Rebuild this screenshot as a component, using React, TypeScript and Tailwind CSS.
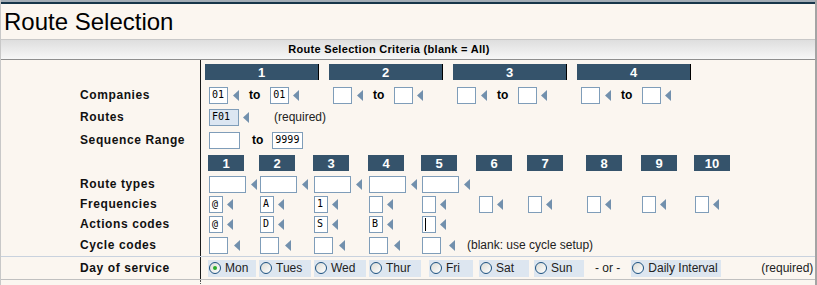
import React from 'react';

const sans = "font-['Liberation_Sans',Arial,sans-serif]";

function Arrow({ className = '' }: { className?: string }) {
  return (
    <svg width="6" height="11" viewBox="0 0 6 11" className={`shrink-0 ${className}`}>
      <path d="M6 0 L0 5.5 L6 11 Z" fill="#7290ad" />
    </svg>
  );
}

function Box({ w, value, blue, cursor, className = '' }: { w: string; value?: string; blue?: boolean; cursor?: boolean; className?: string }) {
  return (
    <div
      className={`${w} h-[17px] shrink-0 border border-[#7f9db9] ${blue ? 'bg-[#dce6f2]' : 'bg-white'} flex items-center pl-[2px] font-['DejaVu_Sans_Mono',monospace] text-[10px] leading-none text-black ${className}`}
    >
      {cursor ? <span className="block w-px h-[13px] bg-black" /> : value}
    </div>
  );
}

function Row({ label, h, children }: { label?: string; h: string; children?: React.ReactNode }) {
  return (
    <div className={`flex ${h}`}>
      <div className="w-[200px] shrink-0 border-r border-[#1a1a1a] pl-[79px] flex items-center font-bold text-[12px] tracking-[0.6px] text-[#111]">
        {label}
      </div>
      <div className="flex items-center flex-1">{children}</div>
    </div>
  );
}

const colW = ['w-[51px]', 'w-[54px]', 'w-[55px]', 'w-[53px]', 'w-[55px]', 'w-[51px]', 'w-[59px]', 'w-[55px]', 'w-[53px]', 'w-[60px]'];

function Bar({ n, w }: { n: string; w: string }) {
  return (
    <div className={`${w} h-[16px] bg-[#35536b] text-white font-bold text-[13px] flex items-center justify-center leading-none`}>
      {n}
    </div>
  );
}

function Radio({ label, w, checked, className = '' }: { label: string; w: string; checked?: boolean; className?: string }) {
  return (
    <div className={`${w} h-[17px] shrink-0 bg-[#dde6f0] flex items-center pl-[1px] ${className}`}>
      <span className="w-[12px] h-[12px] rounded-full border border-[#1c5180] bg-gradient-to-br from-[#dcdcd6] to-white flex items-center justify-center shrink-0">
        {checked && <span className="w-[4px] h-[4px] rounded-full bg-[#2bab2b]" />}
      </span>
      <span className="ml-[4px] text-[12px] text-[#222]">{label}</span>
    </div>
  );
}

export default function App() {
  const freq = ['@', 'A', '1', '', '', '', '', '', '', ''];
  const actions = ['@', 'D', 'S', 'B'];
  return (
    <div className={`w-[817px] h-[285px] overflow-hidden bg-[#fbf6f0] border-l border-[#c8c8c8] border-r-2 border-r-[#a4a4a4] ${sans}`}>
      <div className="h-[2px] bg-[#a3adb6]" />
      <div className="h-[2px] bg-[#17364a]" />
      <div className="h-[35px] flex items-center pl-[3px] text-[24px] text-black leading-none">Route Selection</div>
      <div className="h-[21px] border-t border-[#c8c8c8] border-b border-b-[#8e8e8e] bg-gradient-to-b from-[#dedede] to-[#f7f7f7] flex items-center justify-center pr-[38px] font-bold text-[11px] tracking-[0.3px] text-black">
        Route Selection Criteria (blank = All)
      </div>

      <Row h="h-[24px]">
        <div className="flex pl-[4px]">
          {['1', '2', '3', '4'].map((n) => (
            <div key={n} className="w-[124px]">
              <div className="w-[114px] border-r border-black">
                <Bar n={n} w="w-[113px]" />
              </div>
            </div>
          ))}
        </div>
      </Row>

      <Row label="Companies" h="h-[22px]">
        <div className="flex pl-[4px]">
          {[0, 1, 2, 3].map((i) => (
            <div key={i} className="w-[124px] flex items-center pl-[4px]">
              <Box w="w-[19px]" value={i === 0 ? '01' : ''} />
              <Arrow className="ml-[5px]" />
              <span className="ml-[10px] font-bold text-[12px] text-black">to</span>
              <Box w="w-[19px]" value={i === 0 ? '01' : ''} className="ml-[10px]" />
              <Arrow className="ml-[4px]" />
            </div>
          ))}
        </div>
      </Row>

      <Row label="Routes" h="h-[22px]">
        <div className="flex items-center pl-[8px]">
          <Box w="w-[30px]" value="F01" blue />
          <Arrow className="ml-[4px]" />
          <span className="ml-[25px] text-[12px] text-[#222]">(required)</span>
        </div>
      </Row>

      <Row label="Sequence Range" h="h-[24px]">
        <div className="flex items-center pl-[8px]">
          <Box w="w-[31px]" value="" />
          <span className="ml-[12px] font-bold text-[12px] text-black">to</span>
          <Box w="w-[31px]" value="9999" className="ml-[9px]" />
        </div>
      </Row>

      <Row h="h-[22px]">
        <div className="flex pl-[7px]">
          {colW.map((w, i) => (
            <div key={i} className={w}>
              <Bar n={String(i + 1)} w="w-[36px]" />
            </div>
          ))}
        </div>
      </Row>

      <Row label="Route types" h="h-[20px]">
        <div className="flex pl-[7px]">
          {colW.slice(0, 5).map((w, i) => (
            <div key={i} className={`${w} flex items-center pl-[1px]`}>
              <Box w="w-[37px]" />
              <Arrow className="ml-[5px]" />
            </div>
          ))}
        </div>
      </Row>

      <Row label="Frequencies" h="h-[20px]">
        <div className="flex pl-[7px]">
          {colW.map((w, i) => (
            <div key={i} className={`${w} flex items-center ${i === 5 ? 'pl-[3px]' : 'pl-[1px]'}`}>
              <Box w="w-[14px]" value={freq[i]} />
              <Arrow className="ml-[4px]" />
            </div>
          ))}
        </div>
      </Row>

      <Row label="Actions codes" h="h-[20px]">
        <div className="flex pl-[7px]">
          {colW.slice(0, 5).map((w, i) => (
            <div key={i} className={`${w} flex items-center pl-[1px]`}>
              <Box w="w-[14px]" value={actions[i]} cursor={i === 4} />
              <Arrow className="ml-[4px]" />
            </div>
          ))}
        </div>
      </Row>

      <Row label="Cycle codes" h="h-[22px]">
        <div className="flex pl-[7px]">
          {colW.slice(0, 5).map((w, i) => (
            <div key={i} className={`${w} flex items-center pl-[1px]`}>
              <Box w="w-[19px]" />
              <Arrow className={i === 4 ? 'ml-[8px]' : 'ml-[6px]'} />
            </div>
          ))}
          <span className="ml-[-9px] self-center text-[12px] text-[#222]">(blank: use cycle setup)</span>
        </div>
      </Row>

      <div className="border-t border-[#c9d2de]">
        <div className="border-b border-[#c0c0c0]">
          <Row label="Day of service" h="h-[22px]">
            <div className="flex items-center pl-[7px]">
              <Radio label="Mon" w="w-[48px]" checked />
              <Radio label="Tues" w="w-[52px]" className="ml-[3px]" />
              <Radio label="Wed" w="w-[52px]" className="ml-[3px]" />
              <Radio label="Thur" w="w-[52px]" className="ml-[3px]" />
              <Radio label="Fri" w="w-[44px]" className="ml-[8px]" />
              <Radio label="Sat" w="w-[50px]" className="ml-[6px]" />
              <Radio label="Sun" w="w-[50px]" className="ml-[5px]" />
              <span className="ml-[11px] text-[12px] text-[#222]">- or -</span>
              <Radio label="Daily Interval" w="w-[90px]" className="ml-[11px]" />
              <span className="ml-[40px] text-[12px] text-[#222]">(required)</span>
            </div>
          </Row>
        </div>
      </div>
      <div className="flex h-[6px]">
        <div className="w-[200px] border-r border-dotted border-[#555]" />
      </div>
    </div>
  );
}
